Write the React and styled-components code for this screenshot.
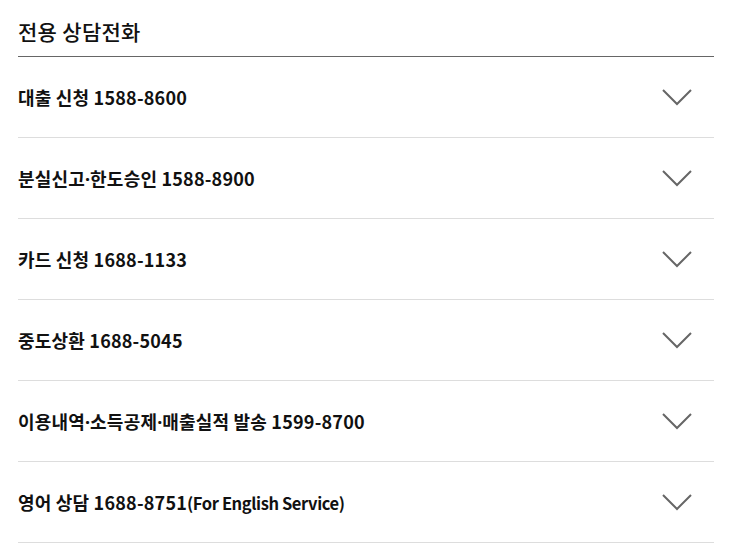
import React from "react";
import styled, { createGlobalStyle } from "styled-components";

const GlobalStyle = createGlobalStyle`
  body {
    margin: 0;
    background: #fff;
    font-family: "Noto Sans CJK KR", "Noto Sans", sans-serif;
    color: #111;
  }
`;

const Wrapper = styled.div`
  padding: 0 19px 0 18px;
`;

const Title = styled.h2`
  margin: 0;
  padding: 16px 0 10px;
  font-size: 21px;
  line-height: 30px;
  font-weight: 500;
  letter-spacing: 0.3px;
  border-bottom: 1px solid #666;
`;

const List = styled.ul`
  list-style: none;
  margin: 0;
  padding: 0;
`;

const Row = styled.li`
  display: flex;
  align-items: center;
  justify-content: space-between;
  height: 80px;
  border-bottom: 1px solid #ddd;
`;

const Label = styled.span`
  font-size: 18px;
  font-weight: 700;
  letter-spacing: 0.2px;
`;

const Dot = styled.span`
  font-family: "Noto Sans", sans-serif;
  letter-spacing: 0;
`;

const Latin = styled.span`
  font-size: 16.5px;
  letter-spacing: -0.4px;
`;

const Toggle = styled.button`
  display: flex;
  align-items: center;
  justify-content: center;
  background: none;
  border: none;
  padding: 0;
  margin-right: 22px;
  width: 30px;
  height: 20px;
  cursor: pointer;
`;

const Chevron = () => (
  <svg width="30" height="18" viewBox="0 0 30 18" fill="none">
    <path d="M1 2 L15 16 L29 2" stroke="#666" strokeWidth="2" />
  </svg>
);

const items = [
  { text: "대출 신청 1588-8600" },
  { text: "분실신고·한도승인 1588-8900" },
  { text: "카드 신청 1688-1133" },
  { text: "중도상환 1688-5045" },
  { text: "이용내역·소득공제·매출실적 발송 1599-8700" },
  { text: "영어 상담 1688-8751", note: "(For English Service)" },
];

const renderLabel = (text) =>
  text.split("·").map((part, i) => (
    <React.Fragment key={i}>
      {i > 0 && <Dot>·</Dot>}
      {part}
    </React.Fragment>
  ));

export default function App() {
  return (
    <>
      <GlobalStyle />
      <Wrapper>
        <Title>전용 상담전화</Title>
        <List>
          {items.map(({ text, note }) => (
            <Row key={text}>
              <Label>
                {renderLabel(text)}
                {note && <Latin>{note}</Latin>}
              </Label>
              <Toggle aria-label="열기">
                <Chevron />
              </Toggle>
            </Row>
          ))}
        </List>
      </Wrapper>
    </>
  );
}
